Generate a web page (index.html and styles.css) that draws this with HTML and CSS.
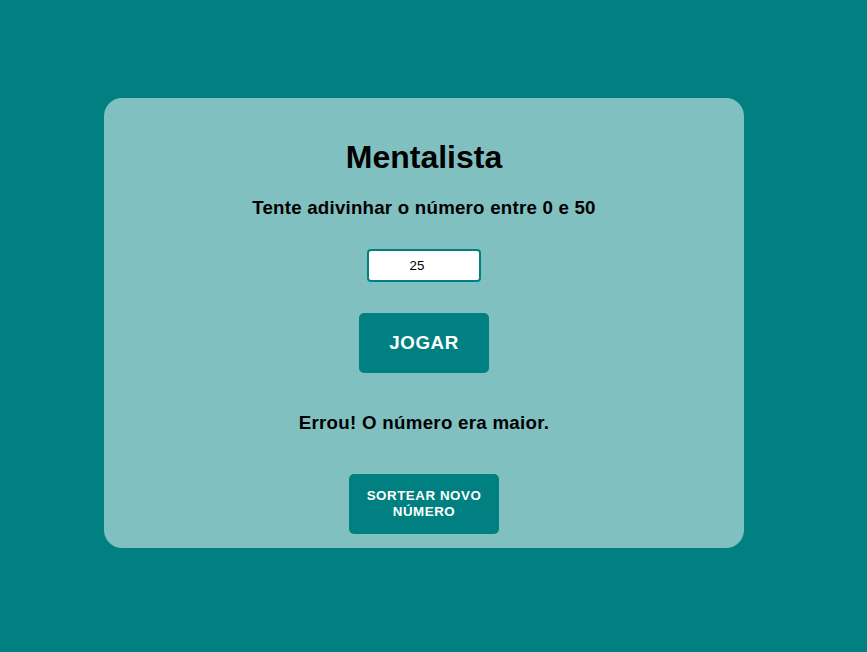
FILE: index.html
```html
<!DOCTYPE html>
<html lang="pt-BR">
<head>
<meta charset="utf-8">
<title>Mentalista</title>
<link rel="stylesheet" href="styles.css">
</head>
<body>
<main class="page">
  <section class="card">
    <h1 class="title">Mentalista</h1>
    <h3 class="subtitle">Tente adivinhar o número entre 0 e 50</h3>
    <input class="guess" type="number" value="25">
    <button class="btn btn-play">JOGAR</button>
    <h3 class="message">Errou! O número era maior.</h3>
    <button class="btn btn-new">SORTEAR NOVO NÚMERO</button>
  </section>
</main>
</body>
</html>
```
FILE: styles.css
```css
html, body {
  margin: 0;
  padding: 0;
  background: #008080;
  font-family: "Liberation Sans", Arial, sans-serif;
}
.page {
  display: flex;
  justify-content: center;
  padding: 98px 19px 0 0;
}
.card {
  width: 640px;
  height: 450px;
  box-sizing: border-box;
  background: #80c0c0;
  border-radius: 18px;
  padding: 20px 20px 0;
  display: flex;
  flex-direction: column;
  align-items: center;
}
.title {
  font-size: 32px;
  font-weight: bold;
  margin: 21px 0 0;
  line-height: 37px;
  color: #000;
}
.subtitle {
  font-size: 18.72px;
  letter-spacing: 0.22px;
  font-weight: bold;
  margin: 21px 0 0;
  line-height: 22px;
}
.guess {
  margin-top: 30px;
  width: 114px;
  height: 33px;
  box-sizing: border-box;
  border: 2px solid #008080;
  border-radius: 4px;
  background: #fff;
  font-family: "Liberation Sans", Arial, sans-serif;
  font-size: 13.33px;
  text-align: center;
  padding: 0 16px 0 2px;
  outline: none;
  -moz-appearance: textfield;
}
.guess::-webkit-inner-spin-button,
.guess::-webkit-outer-spin-button {
  -webkit-appearance: none;
  margin: 0;
}
.btn {
  border: none;
  background: #008080;
  color: #fff;
  font-family: "Liberation Sans", Arial, sans-serif;
  font-weight: bold;
  border-radius: 5px;
  height: 60px;
  cursor: pointer;
}
.btn-play {
  margin-top: 31px;
  width: 130px;
  font-size: 18.72px;
  letter-spacing: 0.6px;
}
.message {
  font-size: 18.72px;
  letter-spacing: 0.28px;
  font-weight: bold;
  margin: 39px 0 0;
  line-height: 22px;
}
.btn-new {
  margin-top: 40px;
  width: 150px;
  font-size: 13.33px;
  letter-spacing: 0.55px;
  line-height: 16px;
  padding: 0 12px;
}
```
